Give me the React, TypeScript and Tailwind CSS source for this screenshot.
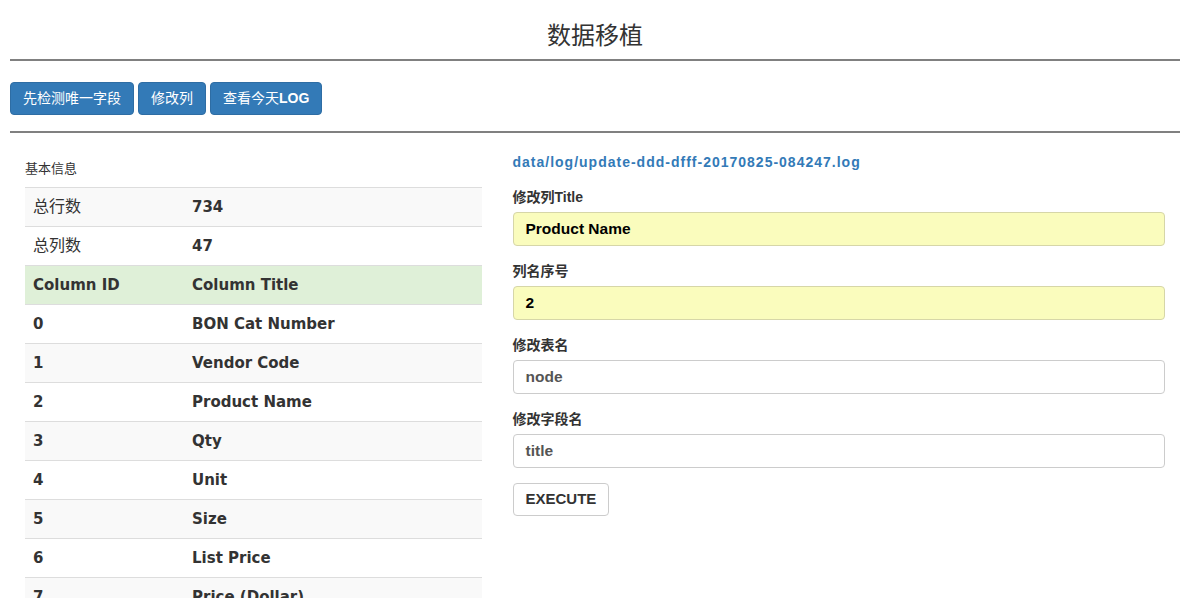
import React from "react";

const cjk = { fontFamily: '"Liberation Sans", "Noto Sans CJK SC", sans-serif' };
const wide = { fontFamily: '"DejaVu Sans", "Noto Sans CJK SC", sans-serif' };

const rows: { a: string; b: string; kind: "info" | "head" | "data" }[] = [
  { a: "总行数", b: "734", kind: "info" },
  { a: "总列数", b: "47", kind: "info" },
  { a: "Column ID", b: "Column Title", kind: "head" },
  { a: "0", b: "BON Cat Number", kind: "data" },
  { a: "1", b: "Vendor Code", kind: "data" },
  { a: "2", b: "Product Name", kind: "data" },
  { a: "3", b: "Qty", kind: "data" },
  { a: "4", b: "Unit", kind: "data" },
  { a: "5", b: "Size", kind: "data" },
  { a: "6", b: "List Price", kind: "data" },
  { a: "7", b: "Price (Dollar)", kind: "data" },
];

function Field({ label, value, yellow, dark }: { label: string; value: string; yellow?: boolean; dark?: boolean }) {
  return (
    <div className="mb-[15px]">
      <div className="text-[14px] font-bold leading-[20px] mb-[5px] text-[#333]">{label}</div>
      <div
        className={
          "h-[34px] rounded-[4px] border flex items-center px-[12px] text-[15.5px] font-bold " +
          (yellow ? "bg-[#fafcbd] border-[#d6d6a8] " : "bg-white border-[#ccc] ") +
          (dark ? "text-black" : "text-[#555]")
        }
      >
        {value}
      </div>
    </div>
  );
}

export default function App() {
  return (
    <div className="bg-white min-h-screen text-[#333]" style={cjk}>
      <div className="ml-[10px] w-[1170px]">
        <div className="h-[59px] flex items-center justify-center pt-[13px] text-[24px] text-[#333]">数据移植</div>
        <div className="h-[2px] bg-[#808080]" />
        <div className="flex gap-[4px] pt-[21px] pb-[16px]">
          <button className="h-[33px] px-[12px] rounded-[4px] bg-[#337ab7] border border-[#2e6da4] text-white text-[14px]">先检测唯一字段</button>
          <button className="h-[33px] px-[12px] rounded-[4px] bg-[#337ab7] border border-[#2e6da4] text-white text-[14px]">修改列</button>
          <button className="h-[33px] px-[12px] rounded-[4px] bg-[#337ab7] border border-[#2e6da4] text-white text-[14px]">
            查看今天<span className="font-bold">LOG</span>
          </button>
        </div>
        <div className="h-[2px] bg-[#808080]" />
        <div className="flex">
          <div className="w-[487.5px] px-[15px] pt-[26px]">
            <div className="text-[13px] leading-[20px] mb-[8px] text-[#333]">基本信息</div>
            <div className="w-[457px]">
              {rows.map((r, i) => {
                const bg =
                  r.kind === "head"
                    ? "bg-[#dff0d8]"
                    : r.kind === "info"
                    ? i === 0
                      ? "bg-[#f9f9f9]"
                      : "bg-white"
                    : Number(r.a) % 2 === 1
                    ? "bg-[#f9f9f9]"
                    : "bg-white";
                return (
                  <div key={i} className={"h-[39px] border-t border-[#ddd] flex items-center " + bg}>
                    <div
                      className={"w-[159px] pl-[8px] " + (r.kind === "info" ? "text-[16px] font-normal" : "text-[15px] font-bold")}
                      style={r.kind === "info" ? cjk : wide}
                    >
                      {r.a}
                    </div>
                    <div className="pl-[8px] text-[15px] font-bold" style={wide}>
                      {r.b}
                    </div>
                  </div>
                );
              })}
            </div>
          </div>
          <div className="w-[682.5px] px-[15px] pt-[19px]">
            <div className="text-[14px] font-bold tracking-[1px] text-[#337ab7] leading-[20px] mb-[15px]">
              data/log/update-ddd-dfff-20170825-084247.log
            </div>
            <Field label="修改列Title" value="Product Name" yellow dark />
            <Field label="列名序号" value="2" yellow dark />
            <Field label="修改表名" value="node" />
            <Field label="修改字段名" value="title" />
            <button className="h-[33px] px-[12px] rounded-[4px] bg-white border border-[#ccc] text-[15px] font-bold text-[#333]">
              EXECUTE
            </button>
          </div>
        </div>
      </div>
    </div>
  );
}
